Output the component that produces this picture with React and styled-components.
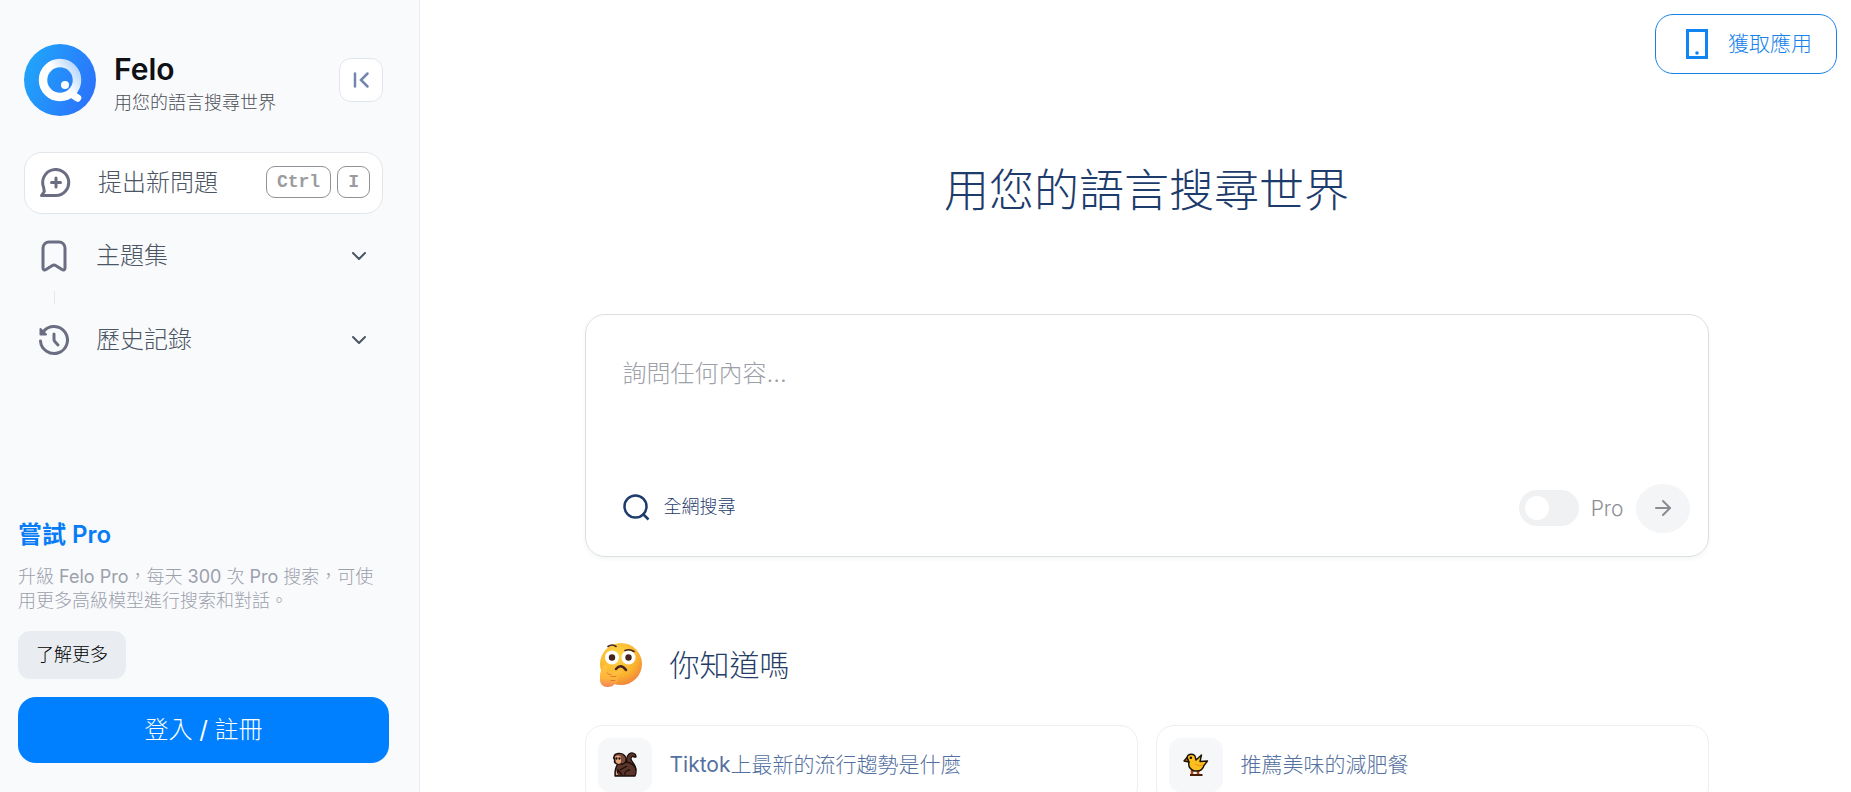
import React from "react";
import styled, { createGlobalStyle } from "styled-components";
import { ArrowRight, ChevronDown } from "lucide-react";

const GlobalStyle = createGlobalStyle`
  *, *::before, *::after { box-sizing: border-box; }
  body {
    margin: 0;
    background: #fff;
    font-family: Inter, "Noto Sans CJK TC", sans-serif;
    font-weight: 300;
    font-size: 18px;
    color: #4b5563;
  }
  button, input, textarea { font: inherit; color: inherit; }
  button { cursor: pointer; }
  h1, h2, p { margin: 0; font-weight: inherit; }
`;

const Page = styled.div`
  display: flex;
  height: 100vh;
  overflow: hidden;
`;

const Sidebar = styled.aside`
  display: flex;
  flex-direction: column;
  flex: none;
  width: 420px;
  padding: 44px 30px 29px 18px;
  background: #f9fafc;
  border-right: 1px solid #e8ebef;
`;

const Brand = styled.header`
  display: flex;
  align-items: center;
  gap: 18px;
  height: 72px;
  padding: 0 6px;
`;

const BrandText = styled.div`
  flex: 1;
  padding-top: 10px;
`;

const BrandName = styled.div`
  font-size: 30px;
  line-height: 36px;
  font-weight: 600;
  color: #0f1115;
`;

const Tagline = styled.div`
  line-height: 32px;
  color: #4b4f57;
`;

const CollapseButton = styled.button`
  display: grid;
  place-items: center;
  width: 44px;
  height: 44px;
  padding: 0;
  background: #fff;
  border: 1px solid #e2e6ec;
  border-radius: 12px;
`;

const Nav = styled.nav`
  display: flex;
  flex-direction: column;
  padding: 36px 6px 0;
`;

const NavItem = styled.button`
  display: flex;
  align-items: center;
  height: ${(p) => (p.$boxed ? 62 : 60)}px;
  padding: 0 12px 0 ${(p) => (p.$boxed ? 14 : 15)}px;
  margin-top: ${(p) => (p.$boxed ? 0 : 12)}px;
  background: ${(p) => (p.$boxed ? "#fff" : "none")};
  border: ${(p) => (p.$boxed ? "1px solid #e2e6ea" : "0")};
  border-radius: 18px;
  font-size: 24px;
  color: #4b5563;
  text-align: left;

  svg { flex: none; }
`;

const Label = styled.span`
  padding-bottom: 5px;
`;

const NavLabel = styled(Label)`
  flex: 1;
  padding-left: 27px;
`;

const Latin = styled.span`
  font-weight: 400;
`;

const Keys = styled.span`
  display: flex;
  gap: 6px;
  padding-bottom: 3px;
`;

const Key = styled.kbd`
  height: 32px;
  padding: 0 10px;
  border: 1px solid #909298;
  border-radius: 9px;
  font: bold 18px/30px "Liberation Mono", monospace;
  color: #9a9ca0;
`;

const NavDivider = styled.div`
  width: 1px;
  height: 13px;
  margin: 5px 0 -6px 30px;
  background: #e4e7ec;
`;

const Promo = styled.section`
  margin-top: auto;
`;

const PromoTitle = styled.h2`
  font-size: 24px;
  line-height: 36px;
  font-weight: 600;
  color: #087cf5;
`;

const PromoText = styled.p`
  padding: 12px 0 18px;
  line-height: 24px;
  color: #9ca0ac;
`;

const MoreButton = styled.button`
  height: 48px;
  padding: 0 18px 4px;
  background: #e9ecf1;
  border: 0;
  border-radius: 12px;
  color: #000;
`;

const LoginButton = styled.button`
  height: 66px;
  margin-top: 18px;
  padding: 0 18px 6px;
  background: #0080ff;
  border: 0;
  border-radius: 18px;
  font-size: 24px;
  color: #fff;
`;

const Main = styled.main`
  display: flex;
  flex-direction: column;
  flex: 1;
  min-width: 0;
  padding: 14px 14px 0 36px;
`;

const AppLink = styled.a`
  display: flex;
  align-items: center;
  align-self: flex-end;
  gap: 20px;
  flex: none;
  height: 60px;
  padding: 0 24px 0 30px;
  border: 1px solid #1681ea;
  border-radius: 18px;
  font-size: 21px;
  color: #1681ea;
  text-decoration: none;
`;

const Content = styled.div`
  width: 100%;
  max-width: 1124px;
  margin: 0 auto;
`;

const Title = styled.h1`
  padding: 83px 0 89px;
  font-size: 45px;
  line-height: 68px;
  color: #1d3b6b;
  text-align: center;
`;

const SearchBox = styled.form`
  display: flex;
  flex-direction: column;
  height: 243px;
  padding: 41px 18px 23px 37px;
  border: 1px solid #dcdfe2;
  border-radius: 20px;
  box-shadow: 0 2px 4px rgba(40, 60, 80, 0.05);
`;

const Question = styled.textarea`
  flex: 1;
  padding: 0;
  border: 0;
  outline: 0;
  resize: none;
  background: none;
  font-size: 24px;
  line-height: 36px;

  &::placeholder { color: #9ca0a8; opacity: 1; }
`;

const SearchActions = styled.div`
  display: flex;
  align-items: center;
  height: 50px;
`;

const ScopeButton = styled.button`
  display: flex;
  align-items: center;
  gap: 14px;
  padding: 0 0 2px;
  margin-right: auto;
  background: none;
  border: 0;
  color: #1d3b6b;
`;

const ProSwitch = styled.label`
  display: flex;
  align-items: center;
  gap: 12px;
  margin-right: 12px;
  font-size: 21px;
  color: #8d8f93;
`;

const Toggle = styled.input`
  display: flex;
  align-items: center;
  appearance: none;
  width: 60px;
  height: 36px;
  margin: 0;
  padding: 0 6px;
  border-radius: 18px;
  background: #f0f1f2;

  &::before {
    content: "";
    width: 24px;
    height: 24px;
    border-radius: 50%;
    background: #fff;
  }
  &:checked { justify-content: flex-end; background: #0080ff; }
`;

const SendButton = styled.button`
  display: grid;
  place-items: center;
  width: 54px;
  height: 49px;
  padding: 0;
  background: #f3f5f7;
  border: 0;
  border-radius: 50%;
  color: #8a8d91;
`;

const TopicsTitle = styled.h2`
  display: flex;
  align-items: center;
  gap: 27px;
  padding: 84px 0 36px 14px;
  font-size: 30px;
  line-height: 48px;
  color: #253d69;
`;

const Topics = styled.div`
  display: grid;
  grid-template-columns: 1fr 1fr;
  gap: 18px;
`;

const Topic = styled.a`
  display: flex;
  align-items: center;
  gap: 18px;
  padding: 12px;
  border: 1px solid #eceef0;
  border-radius: 18px;
  font-size: 21px;
  color: #5470a0;
  text-decoration: none;
`;

const TopicIcon = styled.span`
  display: grid;
  place-items: center;
  width: 54px;
  height: 54px;
  border-radius: 12px;
  background: #f5f7f9;
`;

const Logo = () => (
  <svg width="72" height="72" viewBox="0 0 72 72" aria-hidden="true">
    <defs>
      <linearGradient id="disc" x1="0" y1="0.3" x2="1" y2="0.7">
        <stop offset="0" stopColor="#20a5fa" />
        <stop offset="1" stopColor="#2b72fb" />
      </linearGradient>
      <linearGradient id="ring" x1="0.3" y1="0.6" x2="1" y2="0.1">
        <stop offset="0.3" stopColor="#fff" />
        <stop offset="1" stopColor="#b4d5fd" />
      </linearGradient>
    </defs>
    <circle cx="36" cy="36" r="36" fill="url(#disc)" />
    <circle cx="36" cy="36" r="17" fill="none" stroke="url(#ring)" strokeWidth="8.5" />
    <path d="M49 51l4.500 3" stroke="#fff" strokeWidth="7.500" strokeLinecap="round" />
    <circle cx="41" cy="41" r="4" fill="#fff" />
  </svg>
);

const CollapseIcon = () => (
  <svg width="18" height="18" viewBox="0 0 18 18" fill="none" stroke="#7586ad" strokeWidth="2.500" strokeLinecap="round" aria-hidden="true">
    <path d="M3 2.500v13M15.500 2.500L9 9l6.500 6.500" />
  </svg>
);

const NewChatIcon = () => (
  <svg width="32" height="30" viewBox="0 0 32 30" fill="none" stroke="#6b6e82" strokeWidth="3" strokeLinecap="round" strokeLinejoin="round" aria-hidden="true">
    <path d="M4.500 19A13 13 0 1 1 17 27.500H2.500l2.800-4L4.500 19" />
    <path d="M17 10v9M12.500 14.500h9" />
  </svg>
);

const BookmarkIcon = () => (
  <svg width="30" height="32" viewBox="0 0 30 32" fill="none" stroke="#6b6e82" strokeWidth="3" strokeLinejoin="round" aria-hidden="true">
    <path d="M4 8a6 6 0 0 1 6-6h10a6 6 0 0 1 6 6v20c0 2-1.500 2.500-3 1.500L17 25.700q-2-1.200-4 0L7 29.500c-1.500 1-3 .5-3-1.500z" />
  </svg>
);

const HistoryIcon = () => (
  <svg width="30" height="32" viewBox="0 0 30 32" fill="none" stroke="#6b6e82" strokeWidth="3" strokeLinecap="round" strokeLinejoin="round" aria-hidden="true">
    <path d="M1.500 17A13.500 13.500 0 1 0 4.500 7.500" />
    <path d="M15 10v5.500q0 1 .8 2l3.200 3.500" />
    <path d="M1.500 5v5.500H7z" fill="#6b6e82" strokeWidth="2" />
  </svg>
);

const PhoneIcon = () => (
  <svg width="22" height="30" viewBox="0 0 22 30" aria-hidden="true">
    <path d="M1.500 1.500h19v27h-19z" fill="none" stroke="#0f84f5" strokeWidth="3" />
    <circle cx="11" cy="24" r="1.800" fill="#0f84f5" />
  </svg>
);

const SearchIcon = () => (
  <svg width="27" height="27" viewBox="0 0 27 27" fill="none" stroke="#1d3b6b" strokeWidth="2.500" aria-hidden="true">
    <circle cx="12.500" cy="12.500" r="11" />
    <path d="M19.500 19.500l6 6" />
  </svg>
);

const ThinkingFace = () => (
  <svg width="44" height="46" viewBox="0 0 44 46" aria-hidden="true">
    <defs>
      <radialGradient id="face" cx="0.4" cy="0.3" r="0.75">
        <stop offset="0" stopColor="#ffd94a" />
        <stop offset="0.65" stopColor="#fbb32e" />
        <stop offset="1" stopColor="#ee813d" />
      </radialGradient>
      <linearGradient id="hand" x1="0.2" y1="0" x2="0.1" y2="1">
        <stop offset="0" stopColor="#ffc63b" />
        <stop offset="0.6" stopColor="#fdb43c" />
        <stop offset="1" stopColor="#f2805c" />
      </linearGradient>
    </defs>
    <circle cx="22" cy="22" r="21" fill="url(#face)" />
    <circle cx="13" cy="15.500" r="7" fill="#fff" />
    <circle cx="29.500" cy="15.500" r="7" fill="#fff" />
    <circle cx="13" cy="15.500" r="3.200" fill="#43251f" />
    <circle cx="29.500" cy="15.500" r="3.200" fill="#43251f" />
    <g fill="none" stroke="#43251f" strokeLinecap="round">
      <path d="M9 4.500q4-3 8 0M26 8.500q5-2 9 1" strokeWidth="1.600" />
      <path d="M17 27q5-6 10 1" strokeWidth="2.500" />
    </g>
    <path d="M1 34c0-4 3-11 5-11 3 0 2 4 2 7l12-1.500c4 0 4 3 0 3.500l-3 1c3 0 3 3 1 4 1 2 0 4-2 4-1 3-4 4-8 4C4 45 1 42 1 38z" fill="url(#hand)" />
    <path d="M8 31q2 2 4 1.500M12 34.500h5M12 38.500h4" stroke="#e3792f" strokeWidth="1" strokeLinecap="round" fill="none" />
  </svg>
);

const Monkey = () => (
  <svg width="26" height="26" viewBox="0 0 26 26" stroke="#1b0f0c" strokeWidth="1.300" strokeLinejoin="round" aria-hidden="true">
    <path d="M16 13c-2-4-2-8 1-11 3-2 7-1 7 3h-2c-1-1-2-1-3 1-1 3 5 6 5 12z" fill="#5b3529" />
    <path d="M6 11c-2 4-3 6-3 9v4h20c3-7-1-13-9-14z" fill="#5b3529" />
    <path d="M2 5c0-4 8-5 11-1 2 3 1 7-2 8H5c-3-1-3-3-2-4-1-1-2-2-1-3z" fill="#7c4b3b" />
    <path d="M3 5c1-2 5-2 6 0v5c-1 3-4 2-5 0z" fill="#e5a57d" stroke="none" />
    <path d="M8 18l7-4M5 23l1-5 4 5M13 23c-1-3 2-5 5-5" fill="none" />
    <path d="M4 18l2 5H4z" fill="#e5a57d" stroke="none" />
    <circle cx="4.500" cy="6.500" r=".5" /><circle cx="7.500" cy="6.500" r=".5" />
  </svg>
);

const Chick = () => (
  <svg width="26" height="24" viewBox="0 0 26 24" stroke="#1a1208" strokeWidth="1.400" strokeLinejoin="round" aria-hidden="true">
    <path d="M9 17v4M15 17v4" stroke="#b4480c" strokeWidth="2.500" />
    <path d="M4 4.500C5 0 12 0 12.500 5l.5 2 5.500-5-1.500 6.500L24.500 8 21 12.500C20 16 17 18 14 18h-3c-4-2-6-5-5-8.500z" fill="#fcbf1e" />
    <path d="M1 8l3-3.500L6 9z" fill="#d96b12" />
    <path d="M12 11q4 3 8 1" fill="none" stroke="#ea9414" strokeWidth="1" />
    <path d="M7 22h12.500" stroke="#4a1d08" strokeWidth="2" />
    <circle cx="7.800" cy="4.800" r=".6" />
  </svg>
);

const topics = [
  { latin: "Tiktok", label: "上最新的流行趨勢是什麼", Icon: Monkey },
  { latin: "", label: "推薦美味的減肥餐", Icon: Chick },
];

export default function App() {
  return (
    <Page>
      <GlobalStyle />
      <Sidebar>
        <Brand>
          <Logo />
          <BrandText>
            <BrandName>Felo</BrandName>
            <Tagline>用您的語言搜尋世界</Tagline>
          </BrandText>
          <CollapseButton type="button" aria-label="收合側邊欄"><CollapseIcon /></CollapseButton>
        </Brand>
        <Nav>
          <NavItem type="button" $boxed>
            <NewChatIcon />
            <NavLabel>提出新問題</NavLabel>
            <Keys><Key>Ctrl</Key><Key>I</Key></Keys>
          </NavItem>
          <NavItem type="button">
            <BookmarkIcon />
            <NavLabel>主題集</NavLabel>
            <ChevronDown size={24} strokeWidth={2} />
          </NavItem>
          <NavDivider />
          <NavItem type="button">
            <HistoryIcon />
            <NavLabel>歷史記錄</NavLabel>
            <ChevronDown size={24} strokeWidth={2} />
          </NavItem>
        </Nav>
        <Promo>
          <PromoTitle>嘗試 Pro</PromoTitle>
          <PromoText>
            升級 <Latin>Felo Pro</Latin>，每天 <Latin>300</Latin> 次 <Latin>Pro</Latin> 搜索，可使
            <br />
            用更多高級模型進行搜索和對話。
          </PromoText>
          <MoreButton type="button">了解更多</MoreButton>
        </Promo>
        <LoginButton type="button">登入 <Latin>/</Latin> 註冊</LoginButton>
      </Sidebar>
      <Main>
        <AppLink href="#app"><PhoneIcon /><Label>獲取應用</Label></AppLink>
        <Content>
          <Title>用您的語言搜尋世界</Title>
          <SearchBox>
            <Question aria-label="詢問任何內容" placeholder="詢問任何內容..." />
            <SearchActions>
              <ScopeButton type="button"><SearchIcon /><Label>全網搜尋</Label></ScopeButton>
              <ProSwitch><Toggle type="checkbox" role="switch" />Pro</ProSwitch>
              <SendButton type="button" aria-label="送出"><ArrowRight size={24} strokeWidth={2} /></SendButton>
            </SearchActions>
          </SearchBox>
          <TopicsTitle><ThinkingFace />你知道嗎</TopicsTitle>
          <Topics>
            {topics.map(({ latin, label, Icon }) => (
              <Topic key={label} href="#topic">
                <TopicIcon><Icon /></TopicIcon>
                <Label>{latin && <Latin>{latin}</Latin>}{label}</Label>
              </Topic>
            ))}
          </Topics>
        </Content>
      </Main>
    </Page>
  );
}
